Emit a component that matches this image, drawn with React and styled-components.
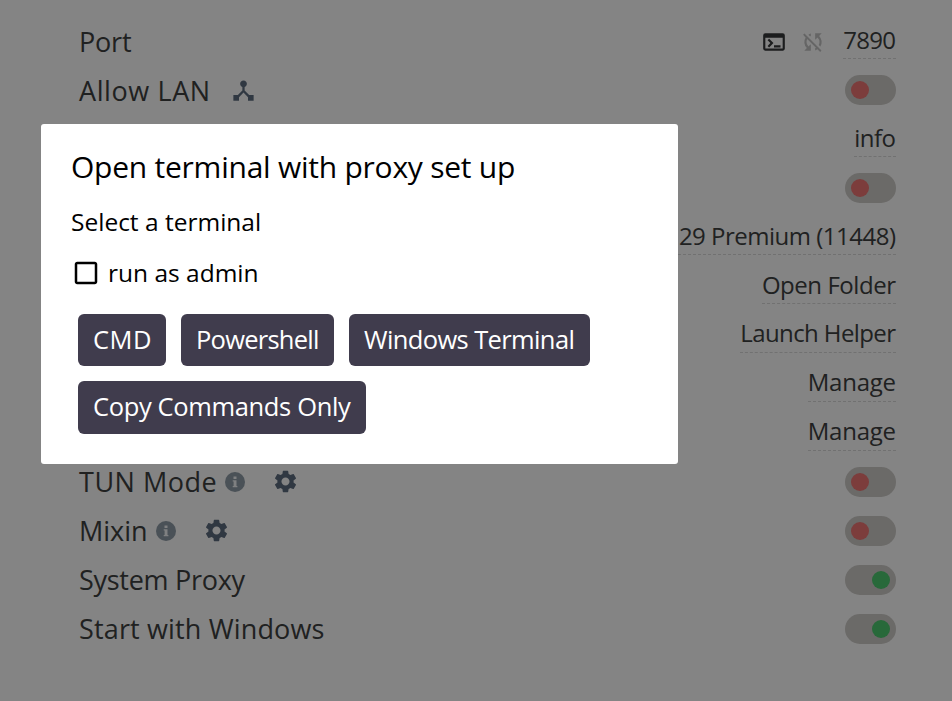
import React from "react";
import styled, { createGlobalStyle } from "styled-components";
import {
  MdOutlineTerminal,
  MdSyncDisabled,
  MdDeviceHub,
  MdSettings,
  MdCheckBoxOutlineBlank,
} from "react-icons/md";

const GlobalStyle = createGlobalStyle`
  * { box-sizing: border-box; }
  body {
    margin: 0;
    background: #848484;
    font-family: "Open Sans", "Noto Sans", sans-serif;
  }
`;

const Screen = styled.main`
  height: 701px;
  padding: 17px 56px 0 78px;
  background: #848484;
  color: #202121;
  overflow: hidden;
`;

const Row = styled.div`
  display: flex;
  justify-content: space-between;
  height: 49px;
`;

const Group = styled.div`
  display: flex;
  align-items: center;
  height: ${(p) => p.$h || 49}px;
`;

const Label = styled.span`
  width: ${(p) => p.$w}px;
  padding-left: 1px;
  font-size: 27px;
  line-height: ${(p) => p.$line || 49}px;
  letter-spacing: ${(p) => p.$track}px;
  white-space: nowrap;
`;

const Icon = styled.span`
  display: flex;
  margin-left: ${(p) => p.$gap}px;
  color: ${(p) => p.$color};
  font-size: ${(p) => p.$size}px;
`;

const Value = styled.span`
  display: flex;
  justify-content: flex-end;
  align-self: flex-start;
  width: ${(p) => p.$w}px;
  height: 42px;
  padding-top: ${(p) => p.$top}px;
  border-bottom: 1px dashed #717171;
  font-size: 24px;
  line-height: 37px;
  white-space: nowrap;
`;

const ValueText = styled.span`
  letter-spacing: ${(p) => p.$track}px;
  margin-right: ${(p) => -p.$track}px;
`;

const Track = styled.span`
  display: flex;
  justify-content: ${(p) => (p.$on ? "flex-end" : "flex-start")};
  width: 51px;
  height: 30px;
  margin-top: 9px;
  padding: 6px;
  border-radius: 15px;
  background: #6b6a68;
`;

const Knob = styled.span`
  width: 18px;
  height: 18px;
  border-radius: 50%;
  background: ${(p) => (p.$on ? "#28693a" : "#7c3d3c")};
`;

const Dialog = styled.section`
  position: fixed;
  left: 41px;
  top: 124px;
  width: 637px;
  height: 340px;
  padding: 22px 30px 0;
  border-radius: 3px;
  background: #fff;
  color: #000;
`;

const Title = styled.h1`
  margin: 0;
  font-size: 30px;
  font-weight: 400;
  line-height: 41px;
  letter-spacing: -0.24px;
`;

const Prompt = styled.p`
  margin: 9px 0 0;
  font-size: 24.5px;
  line-height: 51px;
`;

const CheckRow = styled.label`
  display: flex;
  align-items: center;
  height: 51px;
  font-size: 24.5px;
`;

const Box = styled(MdCheckBoxOutlineBlank)`
  width: 30px;
  height: 30px;
  margin-right: 7px;
`;

const Actions = styled.div`
  display: flex;
  flex-wrap: wrap;
  gap: 15px;
  width: 530px;
  margin: 16px 0 0 7px;
`;

const Button = styled.button`
  width: ${(p) => p.$w}px;
  height: ${(p) => p.$h || 52}px;
  padding: 0 0 3px 15px;
  border: 0;
  border-radius: 6px;
  background: #403c4d;
  color: #fff;
  font: 400 25.5px "Open Sans", "Noto Sans", sans-serif;
  letter-spacing: ${(p) => p.$track}px;
  text-align: left;
  white-space: nowrap;
`;

function Toggle({ on }) {
  return (
    <Track $on={on}>
      <Knob $on={on} />
    </Track>
  );
}

function Link({ w, track, top = 4, children }) {
  return (
    <Value $w={w} $top={top}>
      <ValueText $track={track}>{children}</ValueText>
    </Value>
  );
}

function InfoIcon() {
  return (
    <svg width="24" height="24" viewBox="0 0 24 24">
      <circle cx="12" cy="12" r="10" fill="currentColor" />
      <path d="M10.5 6.5h3v2.4h-3zM9.7 10.2h3.8v5.8h.9v1.3H9.7V16h.9v-4.4h-.9z" fill="#7f8081" />
    </svg>
  );
}

function HelpIcons() {
  return (
    <>
      <Icon $gap={0} $size={24} $color="#4a5157"><InfoIcon /></Icon>
      <Icon $gap={25} $size={27} $color="#303842"><MdSettings /></Icon>
    </>
  );
}

export default function App() {
  return (
    <>
      <GlobalStyle />
      <Screen>
        <Row>
          <Label $track={-0.2}>Port</Label>
          <Group>
            <Icon $gap={0} $size={26} $color="#1c1d1e"><MdOutlineTerminal /></Icon>
            <Icon $gap={13} $size={26} $color="#656565"><MdSyncDisabled /></Icon>
            <Icon $gap={17} />
            <Link w={53} track={-0.75}>7890</Link>
          </Group>
        </Row>
        <Row>
          <Group>
            <Label $w={152} $track={0.6}>Allow LAN</Label>
            <Icon $gap={0} $size={27} $color="#303842"><MdDeviceHub /></Icon>
          </Group>
          <Toggle />
        </Row>
        <Row><span /><Link w={42} track={-0.52}>info</Link></Row>
        <Row><span /><Toggle /></Row>
        <Row><span /><Link w={218} track={-0.5}>29 Premium (11448)</Link></Row>
        <Row><span /><Link w={134} track={-0.45}>Open Folder</Link></Row>
        <Row><span /><Link w={156} track={-0.6} top={3}>Launch Helper</Link></Row>
        <Row><span /><Link w={88} track={-0.25} top={3}>Manage</Link></Row>
        <Row><span /><Link w={88} track={-0.25} top={3}>Manage</Link></Row>
        <Row>
          <Group $h={47}>
            <Label $w={145} $track={0.51}>TUN Mode</Label>
            <HelpIcons />
          </Group>
          <Toggle />
        </Row>
        <Row>
          <Group $h={47}>
            <Label $w={76} $track={0}>Mixin</Label>
            <HelpIcons />
          </Group>
          <Toggle />
        </Row>
        <Row>
          <Label $line={47} $track={-0.28}>System Proxy</Label>
          <Toggle on />
        </Row>
        <Row>
          <Label $line={47} $track={0.15}>Start with Windows</Label>
          <Toggle on />
        </Row>
      </Screen>
      <Dialog role="dialog">
        <Title>Open terminal with proxy set up</Title>
        <Prompt>Select a terminal</Prompt>
        <CheckRow><Box />run as admin</CheckRow>
        <Actions>
          <Button $w={88} $track={0.5}>CMD</Button>
          <Button $w={153} $track={-0.75}>Powershell</Button>
          <Button $w={241} $track={-0.62}>Windows Terminal</Button>
          <Button $w={288} $h={53} $track={-0.36}>Copy Commands Only</Button>
        </Actions>
      </Dialog>
    </>
  );
}
